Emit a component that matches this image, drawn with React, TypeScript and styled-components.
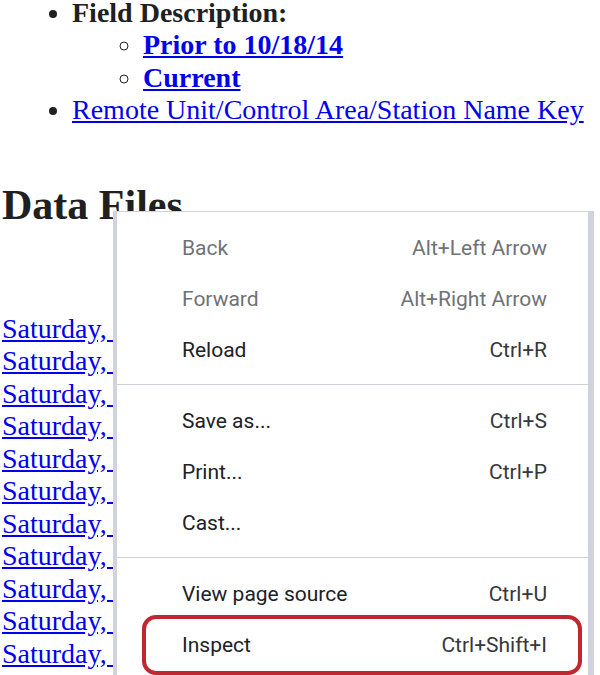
import React from "react";
import styled, { createGlobalStyle } from "styled-components";

const GlobalStyle = createGlobalStyle`
  html, body {
    margin: 0;
    padding: 0;
    background: #ffffff;
    overflow: hidden;
  }
  body {
    font-family: "Liberation Serif", "Times New Roman", serif;
    color: #202020;
  }
`;

const Page = styled.div`
  position: relative;
  padding-left: 2px;
  margin-top: -3px;
  font-size: 28px;
  line-height: normal;
`;

const TopList = styled.ul<{ $nested?: boolean }>`
  margin: 0;
  padding-left: ${(p) => (p.$nested ? "71px" : "70px")};
  list-style-type: ${(p) => (p.$nested ? "circle" : "disc")};
  line-height: 32.4px;
`;

const Item = styled.li`
  font-size: 28px;
`;

const Strong = styled.strong`
  font-weight: bold;
`;

const Link = styled.a<{ $bold?: boolean }>`
  color: #0000ee;
  text-decoration: underline;
  font-weight: ${(p) => (p.$bold ? "bold" : "normal")};
`;

const Heading = styled.h2`
  font-size: 42px;
  font-weight: bold;
  margin: 54px 0 84px 0;
  line-height: normal;
`;

const Files = styled.div`
  font-size: 28px;
  line-height: 32.5px;
`;

const Menu = styled.div`
  position: absolute;
  left: 113px;
  top: 214px;
  width: 471px;
  background: #ffffff;
  border: 1px solid #d2d2de;
  border-left-width: 4px;
  border-right-width: 6px;
  padding: 10px 0 10px 0;
  font-family: Roboto, "Liberation Sans", Arial, sans-serif;
  font-size: 21px;
`;

const Row = styled.div<{ $disabled?: boolean; $highlight?: boolean }>`
  position: relative;
  height: 51px;
  display: flex;
  align-items: center;
  justify-content: space-between;
  padding: 0 41px 0 65px;
  color: ${(p) => (p.$disabled ? "#6f7276" : "#202124")};

  ${(p) =>
    p.$highlight &&
    `
    &::after {
      content: "";
      position: absolute;
      left: 25px;
      right: 6px;
      top: -4px;
      bottom: -5px;
      border: 4px solid #c1272f;
      border-radius: 14px;
    }
  `}
`;

const Shortcut = styled.span<{ $disabled?: boolean }>`
  color: ${(p) => (p.$disabled ? "#6f7276" : "#35383c")};
`;

const Separator = styled.div`
  height: 1px;
  background: #d0d0dc;
  margin: 9px 0 10px 0;
`;

const dates = [
  "March 14, 2020",
  "March 07, 2020",
  "February 29, 2020",
  "February 22, 2020",
  "February 15, 2020",
  "February 08, 2020",
  "February 01, 2020",
  "January 25, 2020",
  "January 18, 2020",
  "January 11, 2020",
  "January 04, 2020",
  "December 28, 2019",
];

type MenuEntry =
  | { kind: "item"; label: string; shortcut?: string; disabled?: boolean; highlight?: boolean }
  | { kind: "sep" };

const entries: MenuEntry[] = [
  { kind: "item", label: "Back", shortcut: "Alt+Left Arrow", disabled: true },
  { kind: "item", label: "Forward", shortcut: "Alt+Right Arrow", disabled: true },
  { kind: "item", label: "Reload", shortcut: "Ctrl+R" },
  { kind: "sep" },
  { kind: "item", label: "Save as...", shortcut: "Ctrl+S" },
  { kind: "item", label: "Print...", shortcut: "Ctrl+P" },
  { kind: "item", label: "Cast..." },
  { kind: "sep" },
  { kind: "item", label: "View page source", shortcut: "Ctrl+U" },
  { kind: "item", label: "Inspect", shortcut: "Ctrl+Shift+I", highlight: true },
];

export default function App() {
  return (
    <>
      <GlobalStyle />
      <Page>
        <TopList>
          <Item>
            <Strong>Field Description:</Strong>
            <TopList $nested>
              <Item>
                <Link $bold href="#">Prior to 10/18/14</Link>
              </Item>
              <Item>
                <Link $bold href="#">Current</Link>
              </Item>
            </TopList>
          </Item>
          <Item>
            <Link href="#">Remote Unit/Control Area/Station Name Key</Link>
          </Item>
        </TopList>

        <Heading>Data Files</Heading>

        <Files>
          {dates.map((d) => (
            <React.Fragment key={d}>
              <Link href="#">Saturday, {d}</Link>
              <br />
            </React.Fragment>
          ))}
        </Files>

        <Menu>
          {entries.map((e, i) =>
            e.kind === "sep" ? (
              <Separator key={i} />
            ) : (
              <Row key={i} $disabled={e.disabled} $highlight={e.highlight}>
                <span>{e.label}</span>
                {e.shortcut && <Shortcut $disabled={e.disabled}>{e.shortcut}</Shortcut>}
              </Row>
            )
          )}
        </Menu>
      </Page>
    </>
  );
}
